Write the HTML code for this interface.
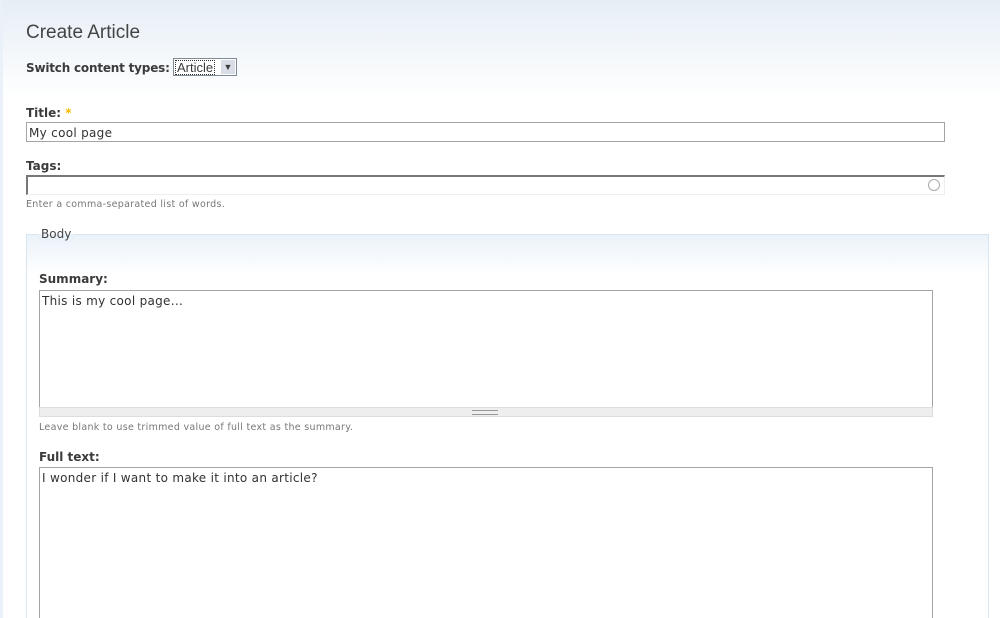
<!DOCTYPE html>
<html style="overflow:hidden;height:618px"><head><style>
body{margin:0;width:1000px;height:618px;overflow:hidden;background:#fff;font-family:"DejaVu Sans","Liberation Sans",sans-serif;color:#3b3b3b;position:relative}
.bg{position:absolute;left:0;top:0;width:1000px;height:100px;background:linear-gradient(#e6eef6,#fff)}
.lb{position:absolute;left:0;top:0;width:3px;height:618px;background:#eaf1f8}
.a{position:absolute;white-space:nowrap}
h1{position:absolute;left:26px;top:22px;margin:0;font:19px "Liberation Sans",sans-serif;color:#444}
.lbl{font-size:12px;font-weight:bold;color:#3b3b3b}
.desc{font-size:9.5px;color:#777;letter-spacing:.3px}
.box{position:absolute;border:1px solid #a5a5a5;background:#fff;box-sizing:border-box;font-size:12px;color:#333;padding:3px 2px 2px;letter-spacing:.3px}
</style></head><body>
<div class="bg"></div><div class="lb"></div>
<h1>Create Article</h1>
<div class="a lbl" style="left:26px;top:61px;letter-spacing:-.2px">Switch content types:</div>
<div class="a" style="left:173px;top:58px;width:64px;height:18px;border:1px solid #7f8a99;box-sizing:border-box;background:#fff;font:13px 'Liberation Sans',sans-serif">
<span style="position:absolute;left:1px;top:1px;border:1px dotted #333;padding:0 1px;line-height:13px">Article</span>
<span style="position:absolute;right:1px;top:1px;width:14px;height:14px;background:#d8dde6;font-size:9px;text-align:center;line-height:14px">&#9660;</span></div>
<div class="a lbl" style="left:26px;top:106px">Title: <span style="color:#f5b800">*</span></div>
<div class="box" style="left:26px;top:122px;width:919px;height:20px">My cool page</div>
<div class="a lbl" style="left:26px;top:159px">Tags:</div>
<div class="box" style="left:26px;top:175px;width:919px;height:20px;border-color:#eee;border-top:2px solid #777;border-left:2px solid #777"></div>
<div class="a" style="left:928px;top:179px;width:10px;height:10px;border:1.5px solid #aaa;border-radius:50%"></div>
<div class="a desc" style="left:26px;top:199px">Enter a comma-separated list of words.</div>
<div class="a" style="left:26px;top:234px;width:963px;height:384px;border:1px solid #d8e6f1;border-bottom:none;box-sizing:border-box;background:linear-gradient(#eaf2f9,#fff 40px)"></div>
<div class="a" style="left:38px;top:227px;padding:0 3px;font-size:12px;color:#444;background:linear-gradient(transparent 7px,#eaf2f9 7px)">Body</div>
<div class="a lbl" style="left:39px;top:272px">Summary:</div>
<div class="box" style="left:39px;top:290px;width:894px;height:118px">This is my cool page...</div>
<div class="a" style="left:39px;top:407px;width:894px;height:10px;background:#eee;border:1px solid #ddd;box-sizing:border-box"><div style="position:absolute;left:432px;top:2px;width:26px;height:3px;border-top:1px solid #999;border-bottom:1px solid #999"></div></div>
<div class="a desc" style="left:39px;top:422px">Leave blank to use trimmed value of full text as the summary.</div>
<div class="a lbl" style="left:39px;top:450px">Full text:</div>
<div class="box" style="left:39px;top:467px;width:894px;height:151px;border-bottom:none">I wonder if I want to make it into an article?</div>
</body></html>
